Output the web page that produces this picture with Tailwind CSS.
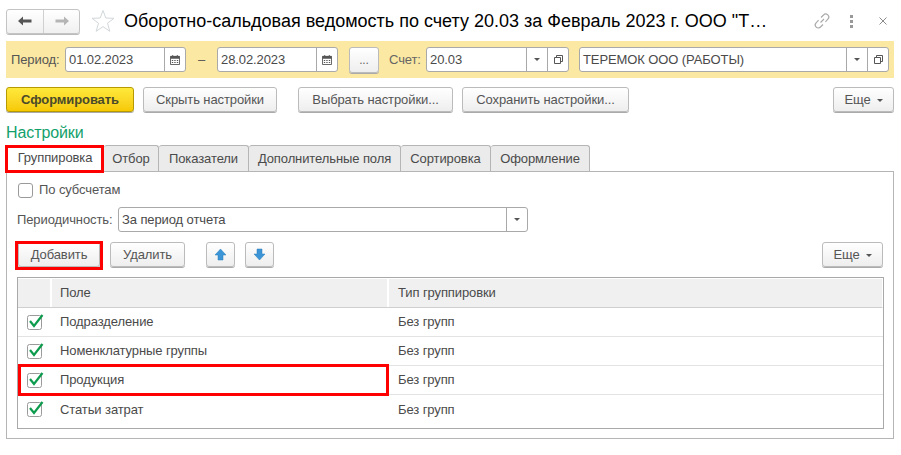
<!doctype html>
<html lang="ru"><head><meta charset="utf-8"><script src="https://cdn.jsdelivr.net/npm/@tailwindcss/browser@4"></script></head>
<body class="bg-white">
<div class="relative w-[901px] h-[455px] overflow-hidden bg-white font-['Liberation_Sans',Arial,sans-serif] text-[13px] tracking-[-0.1px] text-[#4a4a4a] pl-[6px]">

<header class="flex items-center h-[41px] pt-[1px]">
  <div class="flex w-[74px] h-[25px] rounded-[3px] border border-[#c4c4c4] bg-gradient-to-b from-white to-[#f0f0f0] shadow-[0_1px_0_#bbb]">
    <div class="w-[37px] flex items-center justify-center border-r border-[#d0d0d0]"><svg width="16" height="12" viewBox="0 0 16 12"><path d="M1 6 L6 1.5 V4.5 H14.5 V7.5 H6 V10.5 Z" fill="#555"/></svg></div>
    <div class="flex-1 flex items-center justify-center"><svg width="16" height="12" viewBox="0 0 16 12"><path d="M15 6 L10 1.5 V4.5 H1.5 V7.5 H10 V10.5 Z" fill="#b5b5b5"/></svg></div>
  </div>
  <svg class="ml-[11px]" width="24" height="24" viewBox="0 0 24 24"><path d="M12 1.5 L14.8 9 L23 9.3 L16.5 14.2 L18.8 22.3 L12 17.6 L5.2 22.3 L7.5 14.2 L1 9.3 L9.2 9 Z" fill="#fff" stroke="#d2d7da" stroke-width="1"/></svg>
  <h1 class="ml-[9px] w-[690px] text-[18px] tracking-normal leading-[24px] text-black whitespace-nowrap">Оборотно-сальдовая ведомость по счету 20.03 за Февраль 2023 г. ООО "Т…</h1>
  <svg class="ml-[-1px]" width="18" height="18" viewBox="0 0 18 18" fill="none" stroke="#a8a8a8" stroke-width="1.1"><path d="M7.5 10.5 L11 7 M8 5.5 L10.5 3 a3 3 0 0 1 4.4 4.2 L12.4 9.8 M10 12.5 L7.5 15 a3 3 0 0 1 -4.4 -4.2 L5.6 8.2"/></svg>
  <div class="ml-[19px] flex flex-col gap-[2px] w-[3px]"><span class="size-[3px] bg-[#999]"></span><span class="size-[3px] bg-[#999]"></span><span class="size-[3px] bg-[#999]"></span></div>
  <svg class="ml-[26px]" width="8" height="8" viewBox="0 0 8 8" stroke="#8a8a8a" stroke-width="1"><path d="M0.5 0.5 L7.5 7.5 M7.5 0.5 L0.5 7.5"/></svg>
</header>

<section class="flex items-center w-[888px] h-[37px] bg-[#fbe8a2] pl-[5px]">
  <span class="w-[54px] text-[#555]">Период:</span>
  <div class="flex w-[121px] h-[25px] rounded-[3px] border border-[#a9a9a9] bg-white items-stretch">
    <span class="flex-1 pl-[3px] leading-[23px]">01.02.2023</span>
    <span class="w-[21px] border-l border-[#a9a9a9] flex items-center justify-center"><svg width="10" height="10" viewBox="0 0 11 11"><path d="M0.5 1.5 H10.5 V10.5 H0.5 Z" fill="#fff" stroke="#555"/><path d="M0.5 1 H10.5 V4 H0.5 Z M2.5 0 h1 v2 h-1 Z M7.5 0 h1 v2 h-1 Z M2 5.5 h1.5 v1 H2 Z M4.7 5.5 h1.5 v1 H4.7 Z M7.5 5.5 h1.5 v1 H7.5 Z M2 7.7 h1.5 v1 H2 Z M4.7 7.7 h1.5 v1 H4.7 Z M7.5 7.7 h1.5 v1 H7.5 Z" fill="#555"/></svg></span>
  </div>
  <span class="w-[31px] text-center text-[#555]">–</span>
  <div class="flex w-[121px] h-[25px] rounded-[3px] border border-[#a9a9a9] bg-white items-stretch">
    <span class="flex-1 pl-[3px] leading-[23px]">28.02.2023</span>
    <span class="w-[21px] border-l border-[#a9a9a9] flex items-center justify-center"><svg width="10" height="10" viewBox="0 0 11 11"><path d="M0.5 1.5 H10.5 V10.5 H0.5 Z" fill="#fff" stroke="#555"/><path d="M0.5 1 H10.5 V4 H0.5 Z M2.5 0 h1 v2 h-1 Z M7.5 0 h1 v2 h-1 Z M2 5.5 h1.5 v1 H2 Z M4.7 5.5 h1.5 v1 H4.7 Z M7.5 5.5 h1.5 v1 H7.5 Z M2 7.7 h1.5 v1 H2 Z M4.7 7.7 h1.5 v1 H4.7 Z M7.5 7.7 h1.5 v1 H7.5 Z" fill="#555"/></svg></span>
  </div>
  <button class="ml-[11px] w-[30px] h-[26px] rounded-[3px] border border-[#bbb] bg-gradient-to-b from-white to-[#eee] shadow-[0_1px_0_#aaa] text-[12px] text-[#666]">...</button>
  <span class="ml-[10px] w-[37px] text-[#666]">Счет:</span>
  <div class="flex w-[143px] h-[25px] rounded-[3px] border border-[#a9a9a9] bg-white items-stretch">
    <span class="flex-1 pl-[3px] leading-[23px]">20.03</span>
    <span class="w-[21px] border-l border-[#a9a9a9] flex items-center justify-center"><span class="border-x-[3px] border-t-[3px] border-x-transparent border-t-[#555]"></span></span>
    <span class="w-[21px] border-l border-[#a9a9a9] flex items-center justify-center"><svg width="9" height="9" viewBox="0 0 9 9" fill="none" stroke="#555"><path d="M2.5 2.5 V0.5 H8.5 V6.5 H6.5 M0.5 2.5 H6.5 V8.5 H0.5 Z"/></svg></span>
  </div>
  <div class="ml-[10px] flex w-[310px] h-[25px] rounded-[3px] border border-[#a9a9a9] bg-white items-stretch">
    <span class="flex-1 pl-[3px] leading-[23px]">ТЕРЕМОК ООО (РАБОТЫ)</span>
    <span class="w-[21px] border-l border-[#a9a9a9] flex items-center justify-center"><span class="border-x-[3px] border-t-[3px] border-x-transparent border-t-[#555]"></span></span>
    <span class="w-[21px] border-l border-[#a9a9a9] flex items-center justify-center"><svg width="9" height="9" viewBox="0 0 9 9" fill="none" stroke="#555"><path d="M2.5 2.5 V0.5 H8.5 V6.5 H6.5 M0.5 2.5 H6.5 V8.5 H0.5 Z"/></svg></span>
  </div>
</section>

<nav class="flex mt-[9px] h-[25px] items-stretch text-[#555]">
  <button class="w-[128px] pt-[1px] rounded-[3px] border border-[#b79a00] bg-gradient-to-b from-[#ffe93a] to-[#f6c900] shadow-[0_1px_0_#aaa] font-bold text-[#4a4a2a]">Сформировать</button>
  <button class="ml-[9px] w-[134px] pt-[1px] rounded-[3px] border border-[#bbb] bg-gradient-to-b from-white to-[#eee] shadow-[0_1px_0_#aaa]">Скрыть настройки</button>
  <button class="ml-[21px] w-[155px] pt-[1px] rounded-[3px] border border-[#bbb] bg-gradient-to-b from-white to-[#eee] shadow-[0_1px_0_#aaa]">Выбрать настройки...</button>
  <button class="ml-[9px] w-[167px] pt-[1px] rounded-[3px] border border-[#bbb] bg-gradient-to-b from-white to-[#eee] shadow-[0_1px_0_#aaa]">Сохранить настройки...</button>
  <button class="ml-[204px] w-[61px] pt-[1px] rounded-[3px] border border-[#bbb] bg-gradient-to-b from-white to-[#eee] shadow-[0_1px_0_#aaa] flex items-center justify-center gap-[6px]">Еще <span class="border-x-[3px] border-t-[3px] border-x-transparent border-t-[#555]"></span></button>
</nav>

<h2 class="mt-[10px] h-[23px] text-[16px] leading-[21px] font-normal text-[#12a06b]">Настройки</h2>

<div class="flex h-[27px] w-[888px] border-b border-[#b5b5b5]">
  <div class="w-[98px] h-[27px] bg-white border-x border-[#b5b5b5] rounded-t-[3px] text-center leading-[26px]">Группировка</div>
  <div class="w-[55px] bg-[#ebebeb] border-r border-t border-[#b5b5b5] rounded-t-[3px] text-center leading-[25px]">Отбор</div>
  <div class="w-[90px] bg-[#ebebeb] border-r border-t border-[#b5b5b5] rounded-t-[3px] text-center leading-[25px]">Показатели</div>
  <div class="w-[152px] bg-[#ebebeb] border-r border-t border-[#b5b5b5] rounded-t-[3px] text-center leading-[25px]">Дополнительные поля</div>
  <div class="w-[90px] bg-[#ebebeb] border-r border-t border-[#b5b5b5] rounded-t-[3px] text-center leading-[25px]">Сортировка</div>
  <div class="w-[99px] bg-[#ebebeb] border-r border-t border-[#b5b5b5] rounded-t-[3px] text-center leading-[25px]">Оформление</div>
</div>

<main class="w-[888px] h-[267px] border-x border-b border-[#b5b5b5] pl-[10px] pr-[9px] pt-[10px]">
  <label class="flex items-center h-[16px]">
    <span class="ml-[1px] size-[15px] rounded-[3px] border border-[#9a9a9a] bg-white"></span>
    <span class="ml-[6px] text-[#555]">По субсчетам</span>
  </label>
  <div class="flex items-center mt-[9px] h-[25px]">
    <span class="w-[101px] text-[#555]">Периодичность:</span>
    <div class="flex w-[410px] h-[25px] rounded-[3px] border border-[#a9a9a9] bg-white items-stretch">
      <span class="flex-1 pl-[3px] leading-[23px]">За период отчета</span>
      <span class="w-[21px] border-l border-[#a9a9a9] flex items-center justify-center"><span class="border-x-[3px] border-t-[3px] border-x-transparent border-t-[#555]"></span></span>
    </div>
  </div>
  <div class="flex mt-[10px] h-[25px] items-stretch text-[#555]">
    <button class="ml-[1px] w-[82px] pt-[1px] rounded-[3px] border border-[#bbb] bg-gradient-to-b from-white to-[#eee] shadow-[0_1px_0_#aaa]">Добавить</button>
    <button class="ml-[10px] w-[75px] pt-[1px] rounded-[3px] border border-[#bbb] bg-gradient-to-b from-white to-[#eee] shadow-[0_1px_0_#aaa]">Удалить</button>
    <button class="ml-[21px] w-[29px] rounded-[3px] border border-[#bbb] bg-gradient-to-b from-white to-[#eee] shadow-[0_1px_0_#aaa] flex items-center justify-center"><svg width="13" height="13" viewBox="0 0 13 13"><path d="M6.5 1 L12 7 H9 V12 H4 V7 H1 Z" fill="#3b95d6" stroke="#2c7db8" stroke-width="0.5"/></svg></button>
    <button class="ml-[10px] w-[29px] rounded-[3px] border border-[#bbb] bg-gradient-to-b from-white to-[#eee] shadow-[0_1px_0_#aaa] flex items-center justify-center"><svg width="13" height="13" viewBox="0 0 13 13"><path d="M6.5 12 L12 6 H9 V1 H4 V6 H1 Z" fill="#3b95d6" stroke="#2c7db8" stroke-width="0.5"/></svg></button>
    <button class="ml-[548px] w-[61px] pt-[1px] rounded-[3px] border border-[#bbb] bg-gradient-to-b from-white to-[#eee] shadow-[0_1px_0_#aaa] flex items-center justify-center gap-[6px]">Еще <span class="border-x-[3px] border-t-[3px] border-x-transparent border-t-[#555]"></span></button>
  </div>
  <div class="mt-[10px] w-[867px] h-[152px] border border-[#a9a9a9]">
    <div class="flex h-[30px] border-b border-[#cfcfcf] bg-[#f0f0f0] border-t border-r border-t-white border-r-white">
      <div class="w-[34px] border-r-2 border-white"></div>
      <div class="w-[337px] pl-[8px] leading-[27px] border-r-2 border-white">Поле</div>
      <div class="flex-1 pl-[9px] leading-[27px]">Тип группировки</div>
    </div>
    <div class="flex h-[29px] border-b border-[#e3e3e3] items-center">
      <div class="w-[33px] flex justify-center"><svg class="mb-[2px]" width="18" height="17" viewBox="0 0 18 17"><rect x="1.5" y="2.5" width="14" height="14" rx="2" fill="#fff" stroke="#9a9a9a"/><path d="M4 8 L8 13 L16.5 2" fill="none" stroke="#0d9b4d" stroke-width="2.2"/></svg></div>
      <div class="w-[337px] pl-[9px]">Подразделение</div>
      <div class="pl-[10px]">Без групп</div>
    </div>
    <div class="flex h-[29px] border-b border-[#e3e3e3] items-center">
      <div class="w-[33px] flex justify-center"><svg class="mb-[2px]" width="18" height="17" viewBox="0 0 18 17"><rect x="1.5" y="2.5" width="14" height="14" rx="2" fill="#fff" stroke="#9a9a9a"/><path d="M4 8 L8 13 L16.5 2" fill="none" stroke="#0d9b4d" stroke-width="2.2"/></svg></div>
      <div class="w-[337px] pl-[9px]">Номенклатурные группы</div>
      <div class="pl-[10px]">Без групп</div>
    </div>
    <div class="flex h-[29px] border-b border-[#e3e3e3] items-center">
      <div class="w-[33px] flex justify-center"><svg class="mb-[2px]" width="18" height="17" viewBox="0 0 18 17"><rect x="1.5" y="2.5" width="14" height="14" rx="2" fill="#fff" stroke="#9a9a9a"/><path d="M4 8 L8 13 L16.5 2" fill="none" stroke="#0d9b4d" stroke-width="2.2"/></svg></div>
      <div class="w-[337px] pl-[9px]">Продукция</div>
      <div class="pl-[10px]">Без групп</div>
    </div>
    <div class="flex h-[29px] items-center">
      <div class="w-[33px] flex justify-center"><svg class="mb-[2px]" width="18" height="17" viewBox="0 0 18 17"><rect x="1.5" y="2.5" width="14" height="14" rx="2" fill="#fff" stroke="#9a9a9a"/><path d="M4 8 L8 13 L16.5 2" fill="none" stroke="#0d9b4d" stroke-width="2.2"/></svg></div>
      <div class="w-[337px] pl-[9px]">Статьи затрат</div>
      <div class="pl-[10px]">Без групп</div>
    </div>
  </div>
</main>

<div class="absolute left-[5px] top-[145px] w-[99px] h-[28px] border-[3px] border-[#f00]"></div>
<div class="absolute left-[15px] top-[241px] w-[88px] h-[29px] border-[3px] border-[#f00]"></div>
<div class="absolute left-[18px] top-[364px] w-[371px] h-[32px] border-[3px] border-[#f00]"></div>
</div>
</body></html>
